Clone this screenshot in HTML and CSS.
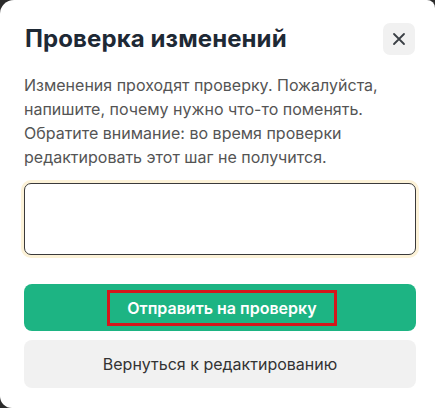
FILE: index.html
```html
<!DOCTYPE html>
<html lang="ru">
<head>
<meta charset="utf-8">
<title>Проверка изменений</title>
<link rel="stylesheet" href="styles.css">
</head>
<body>
<div class="modal">
  <div class="header">
    <h1 class="title">Проверка изменений</h1>
    <button class="close" aria-label="Закрыть">
      <svg width="14" height="14" viewBox="0 0 14 14"><path d="M2 2 L12 12 M12 2 L2 12" stroke="#3a3f45" stroke-width="1.8" stroke-linecap="round"/></svg>
    </button>
  </div>
  <p class="desc">Изменения проходят проверку. Пожалуйста, напишите, почему нужно что-то поменять. Обратите внимание: во время проверки редактировать этот шаг не получится.</p>
  <textarea class="field"></textarea>
  <div class="actions">
    <button class="btn primary"><span class="mark">Отправить на проверку</span></button>
    <button class="btn secondary">Вернуться к редактированию</button>
  </div>
</div>
</body>
</html>
```
FILE: styles.css
```css
html, body {
  margin: 0;
  padding: 0;
  background: #2b2b2b;
}
body {
  width: 435px;
  height: 408px;
  overflow: hidden;
  font-family: Inter, "Noto Sans", sans-serif;
}
.modal {
  box-sizing: border-box;
  width: 435px;
  height: 408px;
  background: #ffffff;
  border-radius: 14px 8px 0 12px;
  padding: 23px 19px 20px 24px;
  display: flex;
  flex-direction: column;
}
.header {
  display: flex;
  align-items: center;
  justify-content: space-between;
  height: 32px;
}
.title {
  margin: 0 0 0 1px;
  font-size: 24px;
  line-height: 32px;
  font-weight: 700;
  color: #1e2935;
  letter-spacing: 0.1px;
}
.close {
  width: 32px;
  height: 32px;
  margin-right: 1px;
  border: none;
  border-radius: 7px;
  background: #f1f1f1;
  display: flex;
  align-items: center;
  justify-content: center;
  padding: 0;
}
.desc {
  margin: 18px 0 0 0;
  font-size: 16px;
  line-height: 24px;
  color: #545454;
}
.field {
  box-sizing: border-box;
  margin: 14px 0 0 0;
  width: 392px;
  height: 72px;
  border: 1px solid #3a3a3a;
  border-radius: 7px;
  box-shadow: 0 0 0 3px #fcf2d8;
  resize: none;
  outline: none;
  background: #fff;
}
.actions {
  margin-top: 29px;
  display: flex;
  flex-direction: column;
  gap: 9px;
  width: 392px;
}
.btn {
  border: none;
  border-radius: 8px;
  font-family: Inter, "Noto Sans", sans-serif;
  font-size: 16px;
  display: flex;
  align-items: center;
  justify-content: center;
  padding: 0;
}
.primary {
  height: 47px;
  background: #1db483;
  color: #ffffff;
  font-weight: 600;
}
.mark {
  display: inline-block;
  border: 3px solid #d4161b;
  padding: 5px 17px;
  margin-left: 4px;
  line-height: 20px;
}
.secondary {
  height: 48px;
  background: #f1f1f1;
  color: #333333;
  font-weight: 400;
}
```
